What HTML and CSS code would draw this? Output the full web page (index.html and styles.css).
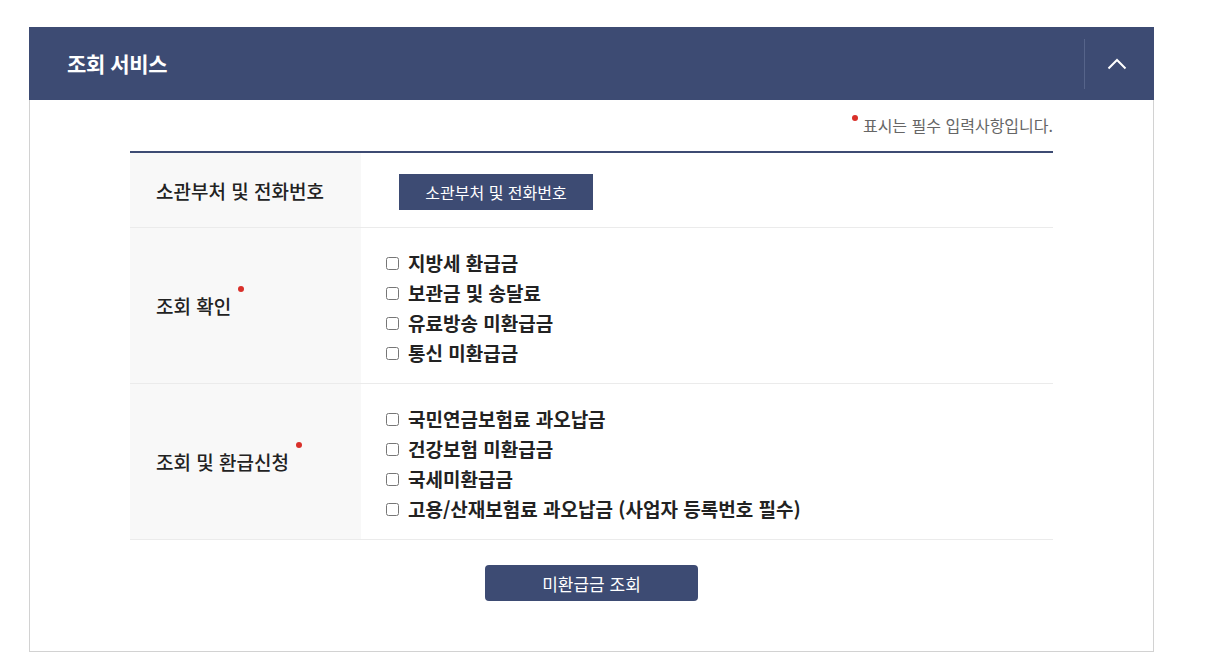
FILE: index.html
```html
<!DOCTYPE html>
<html lang="ko">
<head>
<meta charset="utf-8">
<title>조회 서비스</title>
<link rel="stylesheet" href="styles.css">
</head>
<body>
<section class="panel">
  <header class="panel-head">
    <h2 class="panel-title">조회 서비스</h2>
    <div class="panel-tools">
      <button class="toggle" type="button" aria-label="접기">
        <svg width="20" height="12" viewBox="0 0 20 12"><path d="M1.5 10.5 L10 2 L18.5 10.5" fill="none" stroke="#fff" stroke-width="2"/></svg>
      </button>
    </div>
  </header>
  <div class="panel-body">
    <p class="req-note"><span class="req-dot"></span>표시는 필수 입력사항입니다.</p>
    <table class="form-table">
      <tbody>
        <tr class="row-short">
          <th>소관부처 및 전화번호</th>
          <td><button class="btn-dept" type="button">소관부처 및 전화번호</button></td>
        </tr>
        <tr>
          <th><span class="req">조회 확인</span></th>
          <td>
            <ul class="check-list">
              <li><label><input type="checkbox">지방세 환급금</label></li>
              <li><label><input type="checkbox">보관금 및 송달료</label></li>
              <li><label><input type="checkbox">유료방송 미환급금</label></li>
              <li><label><input type="checkbox">통신 미환급금</label></li>
            </ul>
          </td>
        </tr>
        <tr>
          <th><span class="req">조회 및 환급신청</span></th>
          <td>
            <ul class="check-list">
              <li><label><input type="checkbox">국민연금보험료 과오납금</label></li>
              <li><label><input type="checkbox">건강보험 미환급금</label></li>
              <li><label><input type="checkbox">국세미환급금</label></li>
              <li><label><input type="checkbox">고용/산재보험료 과오납금 (사업자 등록번호 필수)</label></li>
            </ul>
          </td>
        </tr>
      </tbody>
    </table>
    <div class="actions">
      <button class="btn-submit" type="button">미환급금 조회</button>
    </div>
  </div>
</section>
</body>
</html>
```

FILE: styles.css
```css
html, body {
  margin: 0;
  padding: 0;
  background: #fff;
}
body {
  font-family: "Noto Sans CJK KR", "Noto Sans", sans-serif;
  color: #222;
  padding: 27px 0 0 29px;
}
.panel {
  width: 1125px;
  box-sizing: border-box;
}
.panel-head {
  height: 73px;
  background: #3d4b73;
  display: flex;
  align-items: center;
  justify-content: space-between;
}
.panel-title {
  margin: 0 0 0 38px;
  font-size: 21px;
  font-weight: 700;
  letter-spacing: -0.4px;
  color: #fff;
  line-height: 1;
}
.panel-tools {
  display: flex;
  align-items: center;
  height: 50px;
  border-left: 1px solid #56648a;
  margin-right: 5px;
}
.toggle {
  width: 64px;
  height: 50px;
  border: 0;
  padding: 0;
  background: transparent;
  display: flex;
  align-items: center;
  justify-content: center;
  cursor: pointer;
}
.panel-body {
  border: 1px solid #d2d2d2;
  border-top: 0;
  padding: 13px 100px 50px;
}
.req-note {
  margin: 0 0 14px;
  text-align: right;
  font-size: 16px;
  line-height: 24px;
  color: #666;
}
.req-dot {
  display: inline-block;
  width: 6px;
  height: 6px;
  border-radius: 50%;
  background: #d9302a;
  vertical-align: top;
  margin: 2px 5px 0 0;
}
.form-table {
  width: 100%;
  border-collapse: collapse;
  border-top: 2px solid #3d4b73;
}
.form-table tr {
  border-bottom: 1px solid #ebebeb;
}
.form-table th {
  width: 231px;
  box-sizing: border-box;
  background: #f8f8f8;
  text-align: left;
  padding: 0 0 0 26px;
  font-size: 19px;
  font-weight: 500;
  color: #222;
}
.form-table td {
  padding: 19px 25px 16px;
}
.row-short td {
  padding: 21px 38px 17px;
}
.req {
  position: relative;
}
.req::after {
  content: "";
  position: absolute;
  right: -13px;
  top: -6px;
  width: 6px;
  height: 6px;
  border-radius: 50%;
  background: #d9302a;
}
.btn-dept {
  display: block;
  height: 36px;
  width: 194px;
  border: 0;
  background: #3d4b73;
  color: #fff;
  font-family: inherit;
  font-size: 16px;
  padding: 0;
  cursor: pointer;
}
.check-list {
  list-style: none;
  margin: 0;
  padding: 0;
}
.check-list li {
  line-height: 30px;
  height: 30px;
  font-size: 19px;
  font-weight: 700;
  color: #222;
}
.check-list label {
  display: inline-flex;
  align-items: center;
}
.check-list input {
  width: 13px;
  height: 13px;
  margin: 2px 9px 0 0;
}
.actions {
  display: flex;
  justify-content: center;
  padding-top: 25px;
}
.btn-submit {
  width: 213px;
  height: 36px;
  border: 0;
  border-radius: 4px;
  background: #3d4b73;
  color: #fff;
  font-family: inherit;
  font-size: 17px;
  cursor: pointer;
}
```
